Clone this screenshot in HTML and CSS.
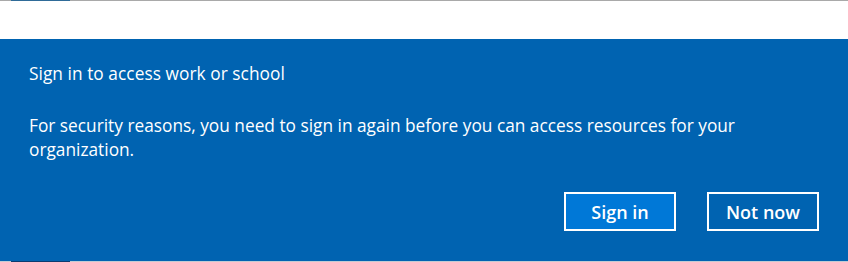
FILE: index.html
```html
<!DOCTYPE html>
<html>
<head>
<meta charset="utf-8">
<link rel="stylesheet" href="styles.css">
</head>
<body>
<div class="topline"><span class="seg"></span></div>
<div class="gap"></div>
<div class="panel">
  <div class="title">Sign in to access work or school</div>
  <div class="msg">For security reasons, you need to sign in again before you can access resources for your organization.</div>
  <div class="actions">
    <button class="btn primary">Sign in</button>
    <button class="btn">Not now</button>
  </div>
</div>
<div class="bottomline"><span class="seg"></span></div>
</body>
</html>
```
FILE: styles.css
```css
html, body { margin: 0; padding: 0; background: #ffffff; }
body { width: 848px; height: 262px; overflow: hidden; font-family: "Open Sans", "Noto Sans", sans-serif; }
.topline { height: 1px; background: #a9a9a9; display: flex; padding-left: 11px; }
.topline .seg { width: 59px; background: #2f6b98; }
.gap { height: 38px; }
.panel { height: 222px; background: #0063b1; color: #ffffff; box-sizing: border-box; padding: 23px 29px 0 29px; display: flex; flex-direction: column; }
.title { font-size: 17.3px; line-height: 24px; letter-spacing: 0.05px; }
.msg { font-size: 17.3px; line-height: 24px; margin-top: 28px; width: 745px; }
.actions { display: flex; justify-content: flex-end; gap: 31px; margin-top: 30px; }
.btn { width: 112px; height: 39px; box-sizing: border-box; border: 2px solid #ffffff; background: #0063b1; color: #ffffff; font-family: "Open Sans", "Noto Sans", sans-serif; font-size: 18px; font-weight: 600; padding: 0; }
.btn.primary { background: #0078d7; }
.bottomline { height: 1px; background: #c3cbd3; display: flex; padding-left: 11px; }
.bottomline .seg { width: 59px; background: #0b3b70; }
```
